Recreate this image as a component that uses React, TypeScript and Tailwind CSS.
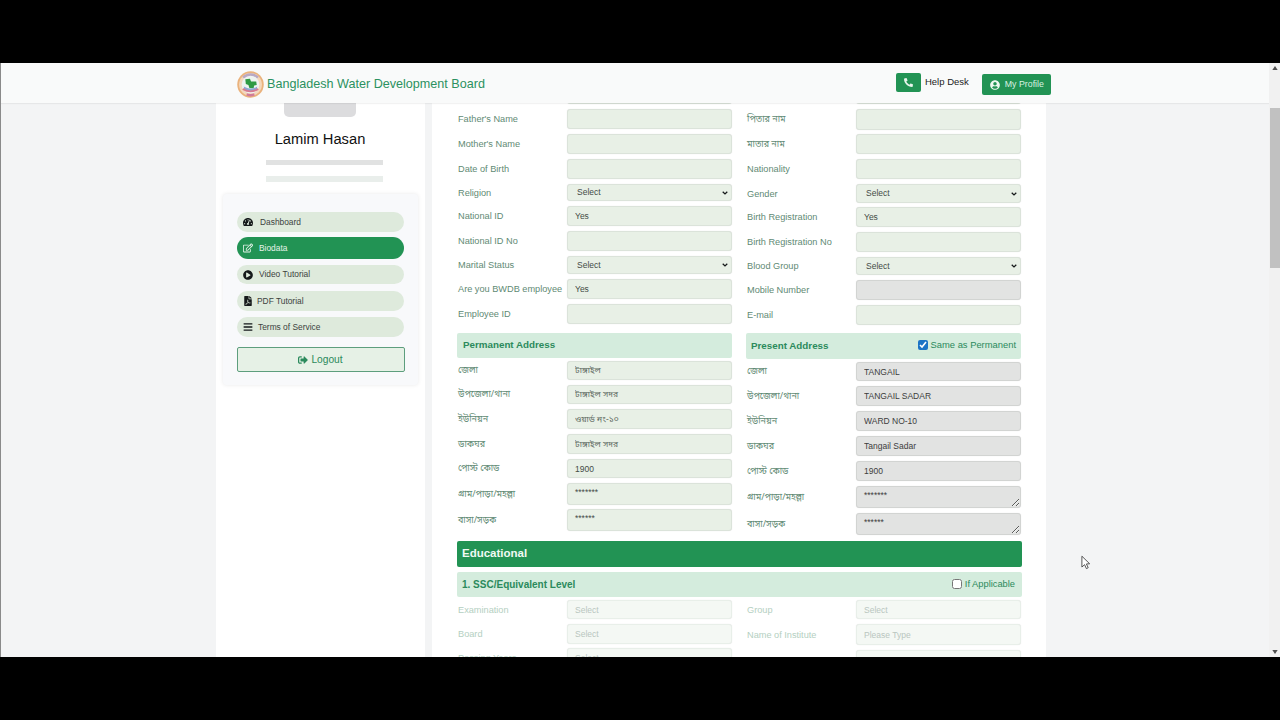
import { FaTachometerAlt, FaRegEdit, FaPlayCircle, FaFilePdf, FaBars, FaSignOutAlt, FaPhone, FaUserCircle } from "react-icons/fa";
import type { ReactNode } from "react";

const BN = '"Noto Sans Bengali","Lohit Bengali","Noto Serif Bengali","Liberation Sans",sans-serif';

type Row = {
  label: string;
  h: number;
  mt: number;
  kind?: "input" | "select" | "area";
  value?: string;
  tone?: "green" | "grey" | "pale";
  resize?: boolean;
  bn?: boolean;
  bnValue?: boolean;
};

function Field({ r }: { r: Row }) {
  const tone = r.tone ?? "green";
  const box =
    tone === "grey"
      ? "bg-[#e2e3e2] border-[#d2d4d2] text-[#3d3d3d]"
      : tone === "pale"
        ? "bg-[#f4f8f4] border-[#e8efe9] text-[#b9c6bf] placeholder:text-[#b9c6bf]"
        : "bg-[#e8f0e6] border-[#dbe3da] text-[#444c46]";
  const common = `w-[165px] rounded-[3px] border text-[8.5px] outline-none shadow-[0_0_1px_rgba(0,0,0,0.12)] ${box}`;
  const style = { height: r.h, marginTop: r.mt };
  const valueFont = r.bnValue ? { fontFamily: BN, color: "#5f6b63" } : undefined;
  const labelColor = tone === "pale" ? "text-[#b4cfc1]" : "text-[#5f8a74]";
  return (
    <div className="flex items-center" style={style}>
      <label
        className={`w-[110px] shrink-0 pl-px pt-[2px] text-[9.2px] leading-none whitespace-nowrap ${labelColor}`}
        style={r.bn ? { fontFamily: BN, fontSize: 9 } : undefined}
      >
        {r.label}
      </label>
      {r.kind === "select" ? (
        <div className="relative h-full w-[165px]">
          <select className={`${common} block h-full appearance-none pl-[9px]`} defaultValue={r.value}>
            <option>{r.value ?? "Select"}</option>
          </select>
          <svg viewBox="0 0 10 7" className="pointer-events-none absolute right-[4px] top-1/2 h-[4px] w-[6px] -translate-y-1/2">
            <path d="M1 1.2 5 5.2 9 1.2" fill="none" stroke="#15191a" strokeWidth="2.2" />
          </svg>
        </div>
      ) : r.kind === "area" ? (
        <textarea
          className={`${common} h-full px-[7px] pt-[2px] leading-[12px] ${r.resize ? "resize" : "resize-none"}`}
          defaultValue={r.value}
          readOnly
        />
      ) : tone === "pale" ? (
        <input className={`${common} h-full px-[7px]`} placeholder={r.value} readOnly />
      ) : (
        <input className={`${common} h-full px-[7px]`} style={valueFont} defaultValue={r.value} readOnly />
      )}
    </div>
  );
}

const topLeft: Row[] = [
  { label: "", h: 20, mt: 0 },
  { label: "Father's Name", h: 20, mt: 5 },
  { label: "Mother's Name", h: 20, mt: 5 },
  { label: "Date of Birth", h: 20, mt: 5 },
  { label: "Religion", h: 17, mt: 5, kind: "select", value: "Select" },
  { label: "National ID", h: 20, mt: 5, value: "Yes" },
  { label: "National ID No", h: 20, mt: 5 },
  { label: "Marital Status", h: 18, mt: 5, kind: "select", value: "Select" },
  { label: "Are you BWDB employee", h: 20, mt: 5, value: "Yes" },
  { label: "Employee ID", h: 20, mt: 5 },
];

const topRight: Row[] = [
  { label: "", h: 20, mt: 0 },
  { label: "পিতার নাম", h: 21, mt: 5, bn: true },
  { label: "মাতার নাম", h: 20, mt: 4, bn: true },
  { label: "Nationality", h: 20, mt: 5 },
  { label: "Gender", h: 19, mt: 5, kind: "select", value: "Select" },
  { label: "Birth Registration", h: 20, mt: 4, value: "Yes" },
  { label: "Birth Registration No", h: 20, mt: 5 },
  { label: "Blood Group", h: 18, mt: 5, kind: "select", value: "Select" },
  { label: "Mobile Number", h: 20, mt: 5, tone: "grey" },
  { label: "E-mail", h: 20, mt: 5 },
];

const permanent: Row[] = [
  { label: "জেলা", h: 19, mt: 3, value: "টাঙ্গাইল", bn: true, bnValue: true },
  { label: "উপজেলা/থানা", h: 19, mt: 5, value: "টাঙ্গাইল সদর", bn: true, bnValue: true },
  { label: "ইউনিয়ন", h: 20, mt: 5, value: "ওয়ার্ড নং-১০", bn: true, bnValue: true },
  { label: "ডাকঘর", h: 20, mt: 5, value: "টাঙ্গাইল সদর", bn: true, bnValue: true },
  { label: "পোস্ট কোড", h: 19, mt: 5, value: "1900", bn: true },
  { label: "গ্রাম/পাড়া/মহল্লা", h: 22, mt: 5, kind: "area", value: "*******", bn: true },
  { label: "বাসা/সড়ক", h: 22, mt: 4, kind: "area", value: "******", bn: true },
];

const present: Row[] = [
  { label: "জেলা", h: 19, mt: 3, value: "TANGAIL", tone: "grey", bn: true },
  { label: "উপজেলা/থানা", h: 20, mt: 5, value: "TANGAIL SADAR", tone: "grey", bn: true },
  { label: "ইউনিয়ন", h: 20, mt: 5, value: "WARD NO-10", tone: "grey", bn: true },
  { label: "ডাকঘর", h: 20, mt: 5, value: "Tangail Sadar", tone: "grey", bn: true },
  { label: "পোস্ট কোড", h: 20, mt: 5, value: "1900", tone: "grey", bn: true },
  { label: "গ্রাম/পাড়া/মহল্লা", h: 22, mt: 5, kind: "area", value: "*******", tone: "grey", resize: true, bn: true },
  { label: "বাসা/সড়ক", h: 22, mt: 5, kind: "area", value: "******", tone: "grey", resize: true, bn: true },
];

const eduLeft: Row[] = [
  { label: "Examination", h: 19, mt: 3, value: "Select", tone: "pale" },
  { label: "Board", h: 20, mt: 5, value: "Select", tone: "pale" },
  { label: "Passing Years", h: 20, mt: 4, value: "Select", tone: "pale" },
];
const eduRight: Row[] = [
  { label: "Group", h: 19, mt: 3, value: "Select", tone: "pale" },
  { label: "Name of Institute", h: 21, mt: 5, value: "Please Type", tone: "pale" },
  { label: "", h: 20, mt: 5, value: "", tone: "pale" },
];

function Column({ rows }: { rows: Row[] }) {
  return (
    <div className="flex w-[275px] flex-col">
      {rows.map((r, i) => (
        <Field key={i} r={r} />
      ))}
    </div>
  );
}

function NavItem({ icon, label, active, h, mt, gap }: { icon: ReactNode; label: string; active?: boolean; h: number; mt: number; gap: number }) {
  return (
    <div
      className={`flex items-center rounded-full pl-[6px] text-[8.4px] ${active ? "bg-[#229354] text-[#e6f4ea]" : "bg-[#deeadc] text-[#3c423e]"}`}
      style={{ height: h, marginTop: mt }}
    >
      <span className={`flex w-[10px] justify-center text-[10px] ${active ? "text-[#e6f4ea]" : "text-[#15191a]"}`}>{icon}</span>
      <span style={{ marginLeft: gap }}>{label}</span>
    </div>
  );
}

function Logo() {
  return (
    <svg viewBox="0 0 52 52" className="h-[27px] w-[27px]">
      <circle cx="26" cy="26" r="25.5" fill="#eab27c" />
      <circle cx="26" cy="26" r="22" fill="#f3d8bd" />
      <path d="M10 11 A22 22 0 0 1 42 11 L38 15 A17 17 0 0 0 14 15Z" fill="#b9a8c4" />
      <circle cx="26" cy="26" r="17" fill="#eef3f1" />
      <path d="M16 16 L25 15 L27 20 L37 20 L38 27 L33 28 L32 33 L24 33 L22 27 L17 25Z" fill="#2f9a44" />
      <path d="M10 36 Q26 46 42 36 L38 32 Q26 40 14 32Z" fill="#d77b8f" />
      <path d="M13 30 Q26 38 39 30 L38 34 Q26 41 14 34Z" fill="#8fa8d6" />
      <path d="M18 47 Q26 51 34 47 L33 43 Q26 46 19 43Z" fill="#d07c9a" />
    </svg>
  );
}

function Section({ children, h, mt, className }: { children: ReactNode; h: number; mt: number; className?: string }) {
  return (
    <div className={`flex items-center justify-between rounded-[2px] bg-[#d4ecdd] text-[#2b8a5c] ${className ?? ""}`} style={{ height: h, marginTop: mt }}>
      {children}
    </div>
  );
}

export default function App() {
  return (
    <div className="flex h-[720px] w-[1280px] flex-col overflow-hidden bg-black" style={{ fontFamily: '"Liberation Sans",Arial,sans-serif' }}>
      <div className="h-[63px] shrink-0" />
      <div className="relative flex h-[594px] shrink-0 bg-[#f3f4f5]">
        <div className="flex w-[1269px] flex-col overflow-hidden">
          <header className="relative z-10 flex h-[40px] shrink-0 items-center bg-[#f9fafa] pt-[2px] shadow-[0_1px_1px_rgba(0,0,0,0.05)]">
            <div className="ml-[237px] flex items-center">
              <Logo />
              <span className="ml-[3px] text-[12.6px] leading-none text-[#2b9160]">Bangladesh Water Development Board</span>
            </div>
            <div className="ml-[411px] -mt-[3px] flex h-[19px] w-[25px] items-center justify-center rounded-[2px] bg-[#229354] text-[9px] text-[#e8f5ec]">
              <FaPhone className="-scale-x-100" />
            </div>
            <span className="ml-[4px] -mt-[3px] text-[9.5px] text-[#222]">Help Desk</span>
            <div className="ml-[13px] mt-[1px] flex h-[21px] w-[69px] items-center rounded-[2px] bg-[#229354] pl-[8px] text-[8.8px] text-[#d9f2e2]">
              <FaUserCircle className="text-[10px] text-[#eef8f1]" />
              <span className="ml-[5px]">My Profile</span>
            </div>
          </header>

          <div className="flex min-h-0 flex-1 pl-[216px]">
            {/* Sidebar */}
            <aside className="w-[209px] shrink-0 bg-white">
              <div className="ml-[68px] h-[14px] w-[72px] rounded-b-[5px] bg-[#dcdcde]" />
              <div className="ml-[-1px] mt-[13px] text-center text-[14.7px] leading-[18px] text-[#111]">Lamim Hasan</div>
              <div className="ml-[50px] mt-[12px] h-[5px] w-[117px] bg-[#e1e2e2]" />
              <div className="ml-[50px] mt-[11px] h-[6px] w-[117px] bg-[#e9eeeb]" />
              <div className="ml-[7px] mt-[12px] h-[191px] w-[195px] rounded-[4px] bg-[#f8f9fb] px-[14px] pt-[18px] shadow-[0_0_4px_rgba(0,0,0,0.09)]">
                <NavItem icon={<FaTachometerAlt />} label="Dashboard" h={20} mt={0} gap={7} />
                <NavItem icon={<FaRegEdit />} label="Biodata" active h={22} mt={5} gap={6} />
                <NavItem icon={<FaPlayCircle />} label="Video Tutorial" h={19} mt={6} gap={6} />
                <NavItem icon={<FaFilePdf />} label="PDF Tutorial" h={20} mt={7} gap={4} />
                <NavItem icon={<FaBars />} label="Terms of Service" h={20} mt={6} gap={5} />
                <div className="-mx-[0.5px] mt-[10px] flex h-[25px] items-center justify-center rounded-[2px] border border-[#5d9e7d] bg-[#e6f1e6] text-[10.2px] text-[#2b8a5c]">
                  <FaSignOutAlt className="mr-[3px] text-[10px]" />
                  Logout
                </div>
              </div>
            </aside>

            {/* Main */}
            <main className="ml-[7px] w-[614px] shrink-0 overflow-hidden bg-white pl-[25px]">
              <div className="-mt-[19px] flex gap-[14px]">
                <div className="flex w-[275px] flex-col">
                  <Column rows={topLeft} />
                  <Section h={25} mt={9} className="pl-[6px]">
                    <span className="text-[9.8px] font-bold">Permanent Address</span>
                  </Section>
                  <Column rows={permanent} />
                </div>
                <div className="flex w-[275px] flex-col">
                  <Column rows={topRight} />
                  <Section h={26} mt={8} className="pl-[5px] pr-[5px]">
                    <span className="text-[9.8px] font-bold">Present Address</span>
                    <label className="-mt-[2px] flex items-center text-[9.4px]">
                      <input type="checkbox" defaultChecked readOnly className="mr-[3px] h-[10px] w-[10px] accent-[#1b74c5]" />
                      Same as Permanent
                    </label>
                  </Section>
                  <Column rows={present} />
                </div>
              </div>
              <div className="mt-[6px] flex h-[26px] w-[565px] items-center rounded-[2px] bg-[#229354] pl-[5px] text-[11.5px] font-bold text-[#f0f9f3]">Educational</div>
              <div className="mt-[5px] flex h-[25px] w-[565px] items-center justify-between rounded-[2px] bg-[#d4ecdd] pl-[5px] pr-[7px] text-[#2b8a5c]">
                <span className="text-[10px] font-bold">1. SSC/Equivalent Level</span>
                <label className="flex items-center text-[9.3px]">
                  <input type="checkbox" readOnly className="mr-[3px] -mt-[2px] h-[10px] w-[10px]" />
                  If Applicable
                </label>
              </div>
              <div className="flex gap-[14px]">
                <Column rows={eduLeft} />
                <Column rows={eduRight} />
              </div>
            </main>
          </div>
        </div>

        {/* Scrollbar */}
        <div className="flex w-[11px] shrink-0 flex-col items-center bg-[#f1f1f1]">
          <svg viewBox="0 0 8 6" className="mt-[3px] h-[4px] w-[6px] fill-[#505050]"><path d="M4 0 8 6H0Z" /></svg>
          <div className="mt-[38px] h-[160px] w-[10px] bg-[#c1c1c1]" />
          <div className="flex-1" />
          <svg viewBox="0 0 8 6" className="mb-[3px] h-[4px] w-[6px] fill-[#505050]"><path d="M0 0H8L4 6Z" /></svg>
        </div>

        {/* Dark window edge and mouse cursor lying over the page */}
        <div className="absolute left-0 top-0 z-20 h-full w-px bg-[#8a8a8a]" />
        <svg viewBox="0 0 10 16" className="absolute left-[1081px] top-[492px] h-[15px] w-[9px]">
          <path d="M1 1v12l3-2.6 2 4.4 2-1-2-4.2 3.6-.2Z" fill="#fff" stroke="#333" strokeWidth="0.9" />
        </svg>
      </div>
      <div className="flex-1" />
    </div>
  );
}
